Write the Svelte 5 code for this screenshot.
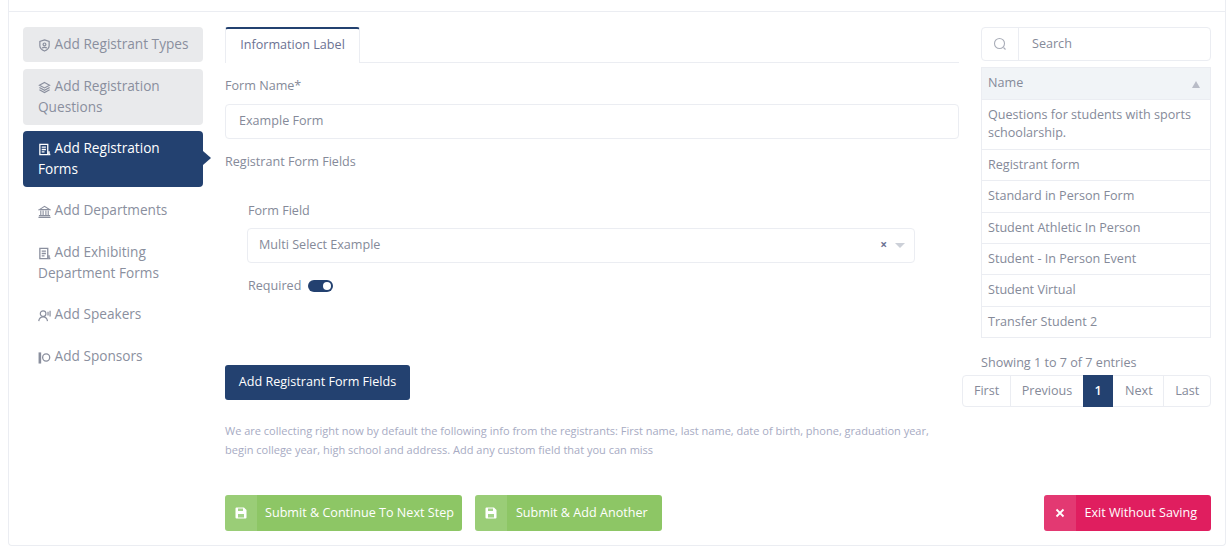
<script>
  const rows = [
    "Questions for students with sports schoolarship.",
    "Registrant form",
    "Standard in Person Form",
    "Student Athletic In Person",
    "Student - In Person Event",
    "Student Virtual",
    "Transfer Student 2"
  ];
  const pages = ["First", "Previous", "1", "Next", "Last"];
</script>

{#snippet formIcon()}
  <svg class="icon" viewBox="0 0 14 14" fill="none" stroke="currentColor" stroke-width="1.4">
    <path d="M2 1.500h8.500v11H2z" />
    <path d="M4 4.500h4.500M4 7h4.500M4 9.500h3" />
    <path stroke-width="1.600" d="M11.800 9v3.500h1.500" />
  </svg>
{/snippet}

{#snippet saveIcon()}
  <svg class="btn-svg" viewBox="0 0 12 12">
    <path fill="#fff" d="M1.500 0.500h7.500l2.500 2.500v7.500a1 1 0 0 1-1 1h-9a1 1 0 0 1-1-1v-9a1 1 0 0 1 1-1z" />
    <path fill="#a5d48a" d="M3 1.500h5v2.500h-5zM3 7h6v3.500h-6z" />
  </svg>
{/snippet}

<div class="card">
  <div class="card-top"></div>
  <div class="layout">
    <nav class="side">
      <a class="item done">
        <svg class="icon" viewBox="0 0 14 14" fill="none" stroke="currentColor" stroke-width="1.3">
          <path d="M7 1l5 1.600v4.600c0 2.600-2.400 4.600-5 5.800-2.600-1.200-5-3.200-5-5.800V2.600z" />
          <circle cx="7" cy="5.800" r="1.500" />
          <path d="M4.500 10c.5-1.400 4.500-1.400 5 0" />
        </svg>
        Add Registrant Types
      </a>
      <a class="item done">
        <svg class="icon" viewBox="0 0 14 14" fill="none" stroke="currentColor" stroke-width="1.2">
          <path d="M7 1.500l5.500 3-5.500 3-5.500-3z" />
          <path d="M1.500 7l5.500 3 5.500-3" />
          <path d="M1.500 9.500l5.500 3 5.500-3" />
        </svg>
        Add Registration Questions
      </a>
      <a class="item active">{@render formIcon()} Add Registration Forms</a>
      <a class="item">
        <svg class="icon" viewBox="0 0 14 14" fill="none" stroke="currentColor" stroke-width="1.2">
          <path d="M1.500 5l5.500-3.500 5.500 3.500z" />
          <path d="M3 6v5M5.500 6v5M8.500 6v5M11 6v5" />
          <path d="M1 11.500h12M0.500 13.300h13" />
        </svg>
        Add Departments
      </a>
      <a class="item">{@render formIcon()} Add Exhibiting Department Forms</a>
      <a class="item">
        <svg class="icon" viewBox="0 0 14 14" fill="none" stroke="currentColor" stroke-width="1.3">
          <circle cx="5.500" cy="5" r="3" />
          <path d="M0.800 13c.4-3 2.400-4.500 4.700-4.500s4.300 1.500 4.700 4.500" />
          <path d="M10.800 3v4M13 2v6" />
        </svg>
        Add Speakers
      </a>
      <a class="item">
        <svg class="icon" viewBox="0 0 14 14" fill="none" stroke="currentColor">
          <path stroke-width="2.800" d="M2 1.500v12" />
          <circle cx="8.800" cy="7" r="3.800" stroke-width="1.400" />
        </svg>
        Add Sponsors
      </a>
    </nav>

    <main class="main">
      <div class="tabs">
        <div class="tab">Information Label</div>
      </div>
      <div class="label name-label">Form Name*</div>
      <div class="input">Example Form</div>
      <div class="label fields-label">Registrant Form Fields</div>

      <div class="field-box">
        <div class="label inset">Form Field</div>
        <div class="select">
          <span>Multi Select Example</span>
          <span class="clear">×</span>
          <span class="caret"></span>
        </div>
        <div class="required">
          <span class="label inset">Required</span>
          <span class="toggle"><span class="knob"></span></span>
        </div>
      </div>

      <button class="add">Add Registrant Form Fields</button>
      <p class="note">
        We are collecting right now by default the following info from the registrants: First name, last name, date of birth, phone, graduation year, begin college year, high school and address. Add any custom field that you can miss
      </p>
    </main>

    <aside class="right">
      <div class="search">
        <span class="search-icon">
          <svg viewBox="0 0 14 14" width="14" height="14" fill="none" stroke="#a9adb8" stroke-width="1.1">
            <circle cx="6.500" cy="6.500" r="5" />
            <path d="M10.500 10.500l2 2" />
          </svg>
        </span>
        <span class="search-text">Search</span>
      </div>
      <table>
        <thead>
          <tr><th>Name <span class="sort"></span></th></tr>
        </thead>
        <tbody>
          {#each rows as row}
            <tr><td>{row}</td></tr>
          {/each}
        </tbody>
      </table>
      <div class="info">Showing 1 to 7 of 7 entries</div>
      <div class="pager-wrap">
        <div class="pager">
          {#each pages as page}
            <span class="page" class:current={page === "1"}>{page}</span>
          {/each}
        </div>
      </div>
    </aside>

    <footer class="actions">
      <div class="left-actions">
        <button class="btn green wide">
          <span class="btn-icon">{@render saveIcon()}</span>
          <span class="btn-label">Submit &amp; Continue To Next Step</span>
        </button>
        <button class="btn green">
          <span class="btn-icon">{@render saveIcon()}</span>
          <span class="btn-label">Submit &amp; Add Another</span>
        </button>
      </div>
      <button class="btn pink">
        <span class="btn-icon">
          <svg class="btn-svg" viewBox="0 0 12 12" fill="none" stroke="#fff" stroke-width="1.800">
            <path d="M2.500 2.500l7 7M9.500 2.500l-7 7" />
          </svg>
        </span>
        <span class="btn-label">Exit Without Saving</span>
      </button>
    </footer>
  </div>
</div>

<style>
  :global(body) {
    background: #fff;
    font-family: "Open Sans", "Noto Sans", sans-serif;
    font-size: 12.6px;
    color: #858a99;
    overflow: hidden;
  }

  .card {
    box-sizing: border-box;
    width: 1218px;
    height: 546px;
    margin-left: 8px;
    border: 1px solid #ebedf2;
    border-top: none;
    border-radius: 0 0 4px 4px;
  }

  .card-top {
    height: 11px;
    border-bottom: 1px solid #ebedf2;
  }

  .layout {
    display: grid;
    grid-template-columns: 180px 734px 230px;
    column-gap: 22px;
    grid-template-rows: auto auto;
    padding: 15px 0 0 14px;
  }

  .side {
    grid-row: 1 / 3;
    width: 180px;
    margin-top: 0.2px;
  }

  .item {
    display: block;
    position: relative;
    box-sizing: border-box;
    padding: 6px 10px 8px 15px;
    margin-bottom: 6.4px;
    border-radius: 4px;
    font-size: 13.65px;
    line-height: 21px;
    color: #8a8f9e;
  }

  .item.done {
    background: #e9eaec;
  }

  .item.active {
    background: #234170;
    color: #fff;
  }

  .item.active::after {
    content: "";
    position: absolute;
    left: 100%;
    top: 20px;
    border: 7px solid transparent;
    border-left: 8px solid #234170;
    border-right: none;
  }

  .icon {
    width: 13px;
    height: 13px;
    vertical-align: -3px;
  }

  .main {
    grid-column: 2;
    min-width: 0;
  }

  .tabs {
    height: 35px;
    border-bottom: 1px solid #ebedf2;
  }

  .tab {
    box-sizing: border-box;
    width: 135px;
    height: 36px;
    padding-top: 6px;
    border: 1px solid #ebedf2;
    border-top: 2px solid #234170;
    border-bottom: none;
    border-radius: 3px 3px 0 0;
    background: #fff;
    text-align: center;
    color: #6c7293;
    line-height: 20px;
  }

  .label {
    line-height: 18px;
  }

  .inset {
    margin-left: 1px;
  }

  .name-label {
    margin-top: 14px;
  }

  .input,
  .select {
    box-sizing: border-box;
    height: 35px;
    border: 1px solid #ebedf2;
    border-radius: 4px;
    line-height: 32px;
  }

  .input {
    margin-top: 9px;
    padding-left: 13px;
  }

  .fields-label {
    margin-top: 14px;
  }

  .field-box {
    box-sizing: border-box;
    width: 690px;
    padding: 31px 0 0 22px;
    height: 194px;
  }

  .select {
    display: flex;
    align-items: center;
    margin-top: 8px;
    padding: 0 9px 2px 11px;
  }

  .select span:first-child {
    flex: 1;
  }

  .clear {
    font-weight: 700;
    font-size: 12px;
    margin-right: 8px;
    color: #6c7293;
  }

  .caret {
    border: 5px solid transparent;
    border-top: 5px solid #ccd0d8;
    border-bottom: none;
    margin-top: 2px;
  }

  .required {
    display: flex;
    align-items: center;
    gap: 7px;
    margin-top: 14px;
  }

  .toggle {
    display: flex;
    align-items: center;
    justify-content: flex-end;
    box-sizing: border-box;
    width: 25px;
    height: 12px;
    padding-right: 2px;
    border-radius: 6px;
    background: #234170;
  }

  .knob {
    width: 8px;
    height: 8px;
    border-radius: 50%;
    background: #fff;
  }

  .add {
    display: block;
    width: 185px;
    height: 35px;
    padding: 0 0 3px;
    border: none;
    border-radius: 3px;
    background: #234170;
    color: #fff;
    font: 500 12.6px "Open Sans", sans-serif;
  }

  .note {
    margin: 21px 0 0;
    font-size: 11px;
    line-height: 19px;
    color: #a7abc3;
  }

  .right {
    grid-column: 3;
    grid-row: 1 / 2;
    min-width: 0;
  }

  .search {
    display: flex;
    box-sizing: border-box;
    height: 34px;
    border: 1px solid #ebedf2;
    border-radius: 4px;
    line-height: 32px;
    font-size: 12.6px;
  }

  .search-icon {
    display: flex;
    align-items: center;
    justify-content: center;
    width: 36px;
    border-right: 1px solid #ebedf2;
  }

  .search-text {
    padding-left: 13px;
  }

  table {
    width: 100%;
    margin-top: 6px;
    border-collapse: collapse;
    line-height: 18px;
  }

  th,
  td {
    border: 1px solid #ebedf2;
    font-weight: 400;
    text-align: left;
  }

  td {
    padding: 6px 6px 6.4px;
  }

  tbody tr:first-child td {
    padding-bottom: 6.8px;
  }

  th {
    position: relative;
    height: 32px;
    box-sizing: border-box;
    padding: 0 6px 2px;
    background: #f1f4f7;
  }

  .sort {
    position: absolute;
    right: 10px;
    top: 13px;
    border: 4px solid transparent;
    border-bottom: 7px solid #b9bcc7;
    border-top: none;
  }

  .info {
    margin-top: 15.8px;
    line-height: 18px;
  }

  .pager-wrap {
    display: flex;
    justify-content: flex-end;
    margin-top: 3px;
  }

  .pager {
    display: flex;
    flex-shrink: 0;
    border: 1px solid #ebedf2;
    border-radius: 4px;
    height: 32px;
    box-sizing: border-box;
  }

  .page {
    padding: 0 10.75px;
    border-right: 1px solid #ebedf2;
    line-height: 29px;
    font-size: 12.6px;
  }

  .page:last-child {
    border-right: none;
  }

  .page.current {
    margin: -1px 1px -1px -1px;
    padding: 0 11.5px;
    line-height: 31px;
    background: #234170;
    color: #fff;
    font-weight: 600;
    border-right: none;
  }

  .actions {
    grid-column: 2 / 4;
    grid-row: 2;
    display: flex;
    justify-content: space-between;
    margin-top: 36px;
  }

  .left-actions {
    display: flex;
    gap: 13px;
  }

  .btn {
    display: flex;
    align-items: stretch;
    height: 36px;
    padding: 0;
    border: none;
    border-radius: 3px;
    color: #fff;
    font: 500 12.6px "Open Sans", sans-serif;
    overflow: hidden;
  }

  .btn-icon {
    display: flex;
    align-items: center;
    justify-content: center;
    width: 32px;
    background: rgba(255, 255, 255, 0.12);
  }

  .btn-svg {
    width: 12px;
    height: 12px;
  }

  .btn-label {
    align-self: center;
    padding: 0 14px 2px 9px;
  }

  .wide .btn-label {
    padding: 0 8px 2px 8px;
  }

  .green {
    background: #8dc665;
  }

  .pink {
    background: #e01e5f;
  }

  .pink .btn-label {
    padding-left: 8px;
    padding-right: 14px;
  }
</style>
